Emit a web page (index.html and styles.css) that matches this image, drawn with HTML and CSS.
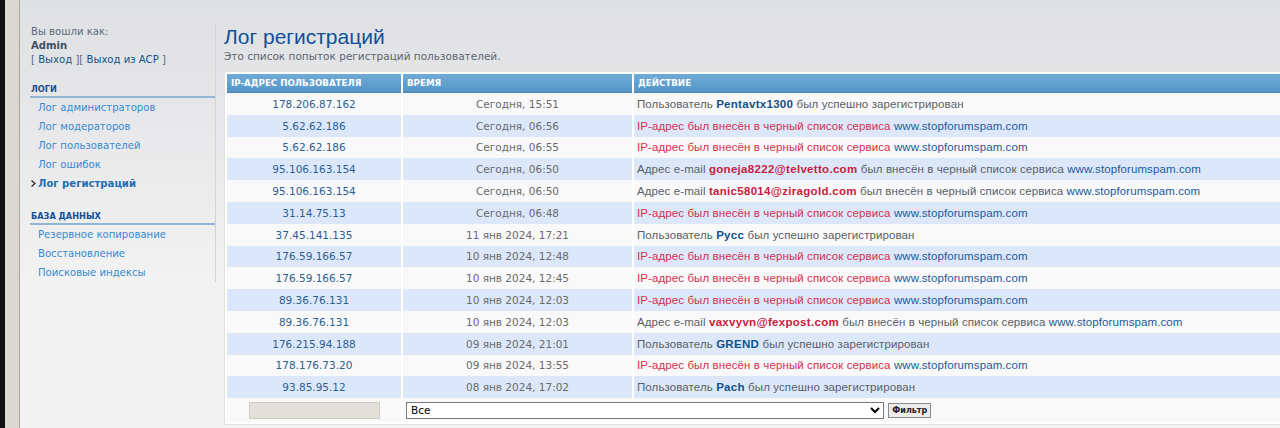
FILE: index.html
```html
<!DOCTYPE html>
<html lang="ru">
<head>
    <meta charset="UTF-8">
    <title>Лог регистраций</title>
    <link rel="stylesheet" href="styles.css">
</head>
<body>
    <div class="edge"></div>
    <div class="strip"></div>

    <div class="page">
        <!-- Меню слева -->
        <div class="sidebar">
            <div class="user-info">
                Вы вошли как:<br>
                <strong>Admin</strong><br>
                [ <a href="#">Выход</a> ][ <a href="#">Выход из ACP</a> ]
            </div>

            <h3>Логи</h3>
            <ul class="menu">
                <li><a href="#">Лог администраторов</a></li>
                <li><a href="#">Лог модераторов</a></li>
                <li><a href="#">Лог пользователей</a></li>
                <li><a href="#">Лог ошибок</a></li>
                <li class="active">
                    <svg class="arrow" width="5" height="7" viewBox="0 0 5 7"><path d="M0.5 0.5 L4 3.5 L0.5 6.5" fill="none" stroke="#333" stroke-width="1.4"/></svg>
                    <a href="#">Лог регистраций</a>
                </li>
            </ul>

            <h3>База данных</h3>
            <ul class="menu">
                <li><a href="#">Резервное копирование</a></li>
                <li><a href="#">Восстановление</a></li>
                <li><a href="#">Поисковые индексы</a></li>
            </ul>
        </div>

        <!-- Основная часть -->
        <div class="main">
            <h1>Лог регистраций</h1>
            <p class="subtitle">Это список попыток регистраций пользователей.</p>

            <div class="panel">
                <table class="log-table">
                    <thead>
                        <tr>
                            <th class="col-ip">IP-адрес пользователя</th>
                            <th class="col-time">Время</th>
                            <th>Действие</th>
                        </tr>
                    </thead>
                    <tbody>
                        <tr>
                            <td class="ip">178.206.87.162</td>
                            <td class="time">Сегодня, 15:51</td>
                            <td class="action">Пользователь <b class="user">Pentavtx1300</b> был успешно зарегистрирован</td>
                        </tr>
                        <tr>
                            <td class="ip">5.62.62.186</td>
                            <td class="time">Сегодня, 06:56</td>
                            <td class="action"><span class="bad">IP-адрес был внесён в черный список сервиса</span> <a href="#">www.stopforumspam.com</a></td>
                        </tr>
                        <tr>
                            <td class="ip">5.62.62.186</td>
                            <td class="time">Сегодня, 06:55</td>
                            <td class="action"><span class="bad">IP-адрес был внесён в черный список сервиса</span> <a href="#">www.stopforumspam.com</a></td>
                        </tr>
                        <tr>
                            <td class="ip">95.106.163.154</td>
                            <td class="time">Сегодня, 06:50</td>
                            <td class="action">Адрес e-mail <b class="mail">goneja8222@telvetto.com</b> был внесён в черный список сервиса <a href="#">www.stopforumspam.com</a></td>
                        </tr>
                        <tr>
                            <td class="ip">95.106.163.154</td>
                            <td class="time">Сегодня, 06:50</td>
                            <td class="action">Адрес e-mail <b class="mail">tanic58014@ziragold.com</b> был внесён в черный список сервиса <a href="#">www.stopforumspam.com</a></td>
                        </tr>
                        <tr>
                            <td class="ip">31.14.75.13</td>
                            <td class="time">Сегодня, 06:48</td>
                            <td class="action"><span class="bad">IP-адрес был внесён в черный список сервиса</span> <a href="#">www.stopforumspam.com</a></td>
                        </tr>
                        <tr>
                            <td class="ip">37.45.141.135</td>
                            <td class="time">11 янв 2024, 17:21</td>
                            <td class="action">Пользователь <b class="user">Pycc</b> был успешно зарегистрирован</td>
                        </tr>
                        <tr>
                            <td class="ip">176.59.166.57</td>
                            <td class="time">10 янв 2024, 12:48</td>
                            <td class="action"><span class="bad">IP-адрес был внесён в черный список сервиса</span> <a href="#">www.stopforumspam.com</a></td>
                        </tr>
                        <tr>
                            <td class="ip">176.59.166.57</td>
                            <td class="time">10 янв 2024, 12:45</td>
                            <td class="action"><span class="bad">IP-адрес был внесён в черный список сервиса</span> <a href="#">www.stopforumspam.com</a></td>
                        </tr>
                        <tr>
                            <td class="ip">89.36.76.131</td>
                            <td class="time">10 янв 2024, 12:03</td>
                            <td class="action"><span class="bad">IP-адрес был внесён в черный список сервиса</span> <a href="#">www.stopforumspam.com</a></td>
                        </tr>
                        <tr>
                            <td class="ip">89.36.76.131</td>
                            <td class="time">10 янв 2024, 12:03</td>
                            <td class="action">Адрес e-mail <b class="mail">vaxvyvn@fexpost.com</b> был внесён в черный список сервиса <a href="#">www.stopforumspam.com</a></td>
                        </tr>
                        <tr>
                            <td class="ip">176.215.94.188</td>
                            <td class="time">09 янв 2024, 21:01</td>
                            <td class="action">Пользователь <b class="user">GREND</b> был успешно зарегистрирован</td>
                        </tr>
                        <tr>
                            <td class="ip">178.176.73.20</td>
                            <td class="time">09 янв 2024, 13:55</td>
                            <td class="action"><span class="bad">IP-адрес был внесён в черный список сервиса</span> <a href="#">www.stopforumspam.com</a></td>
                        </tr>
                        <tr>
                            <td class="ip">93.85.95.12</td>
                            <td class="time">08 янв 2024, 17:02</td>
                            <td class="action">Пользователь <b class="user">Pach</b> был успешно зарегистрирован</td>
                        </tr>
                        <tr class="filter-row">
                            <td class="ip"><span class="blank-box"></span></td>
                            <td colspan="2" class="filter">
                                <select class="filter-select">
                                    <option>Все</option>
                                </select>
                                <button class="filter-btn">Фильтр</button>
                            </td>
                        </tr>
                    </tbody>
                </table>
            </div>
        </div>
    </div>
</body>
</html>
```

FILE: styles.css
```css
/* Сброс */
* {
    margin: 0;
    padding: 0;
    box-sizing: border-box;
}

body {
    display: flex;
    height: 428px;
    overflow: hidden;
    font-family: "DejaVu Sans", Verdana, sans-serif;
    font-size: 10.5px;
    color: #536482;
}

a {
    color: #105289;
    text-decoration: none;
}

/* Полоски слева */
.edge {
    width: 5px;
    flex-shrink: 0;
    background: #111111;
}

.strip {
    width: 15px;
    flex-shrink: 0;
    background: #dbd8d1;
    border-right: 1px solid #aaa69f;
}

.page {
    display: flex;
    align-items: flex-start;
    width: 1320px;
    flex-shrink: 0;
    background: linear-gradient(#dfe0e3 0, #f3f3f3 300px);
}

/* Меню слева */
.sidebar {
    width: 196px;
    flex-shrink: 0;
    margin-top: 25px;
    padding-left: 11px;
    border-right: 1px solid #d4d4d4;
    font-size: 10.1px;
}

.user-info {
    line-height: 14px;
    color: #5d6b7c;
}

.user-info strong {
    color: #3f4f62;
}

.user-info a {
    color: #105289;
}

.sidebar h3 {
    margin: 15px 0 0 -1px;
    padding-left: 1px;
    font-size: 8.2px;
    line-height: 14px;
    text-transform: uppercase;
    color: #115098;
    border-bottom: 2px solid #93b6d6;
}

.sidebar .menu + h3 {
    margin-top: 16px;
}

.menu {
    list-style: none;
}

.menu li {
    line-height: 19px;
    padding-left: 7px;
    position: relative;
}

.menu li a {
    color: #368ad2;
}

.menu li.active a {
    color: #1f6fb5;
    font-weight: bold;
}

.menu .arrow {
    position: absolute;
    left: 0;
    top: 6px;
}

/* Основная часть */
.main {
    flex: 1;
    margin-left: 8px;
}

h1 {
    margin-top: 26px;
    font-family: "Liberation Sans", Arial, sans-serif;
    font-size: 21px;
    font-weight: normal;
    line-height: 22px;
    color: #115098;
}

.subtitle {
    margin-top: 1px;
    line-height: 14px;
    color: #5c6470;
}

.panel {
    margin-top: 8px;
    background: #ffffff;
    border: 1px solid #e2e2e2;
    padding: 2px;
}

.log-table {
    width: 100%;
    border-collapse: separate;
    border-spacing: 2px 0;
    margin: 0 -2px;
    table-layout: fixed;
}

.log-table th {
    height: 19px;
    padding: 0 4px;
    text-align: left;
    font-size: 8.7px;
    font-weight: bold;
    text-transform: uppercase;
    color: #ffffff;
    background: linear-gradient(#6fabd6, #5596c7);
    border-bottom: 1px solid #4a86b5;
}

.log-table .col-ip {
    width: 174px;
}

.log-table .col-time {
    width: 229px;
}

.log-table td {
    height: 21.8px;
    padding: 0 3px;
    white-space: nowrap;
    background: #f9f9f9;
}

.log-table tbody tr:nth-child(even) td {
    background: #dce8fa;
}

.ip {
    text-align: center;
    color: #2d5f93;
}

.time {
    text-align: center;
    color: #6a6a6a;
}

.action {
    font-family: "Liberation Sans", Arial, sans-serif;
    font-size: 11.5px;
    letter-spacing: 0.1px;
    color: #595f66;
}

.action b {
    letter-spacing: 0.3px;
}

.action .user {
    color: #105289;
}

.action .bad {
    color: #d4304f;
}

.action .mail {
    color: #c8213f;
}

.action a {
    color: #1b5a9a;
}

/* Строка фильтра */
.log-table tr.filter-row td {
    height: 24px;
    background: #f9f9f9;
}

.blank-box {
    display: inline-block;
    width: 131px;
    height: 17px;
    vertical-align: middle;
    background: #e3e0db;
    border: 1px solid #cfccc6;
}

.filter {
    padding-left: 2px;
}

.filter-select {
    width: 478px;
    height: 17px;
    vertical-align: middle;
    font-family: "DejaVu Sans", Verdana, sans-serif;
    font-size: 10.5px;
    color: #000;
    background: #fff;
    border: 1px solid #7a7a7a;
}

.filter-btn {
    height: 15px;
    margin-left: 1px;
    padding: 0 3px;
    vertical-align: middle;
    font-family: "DejaVu Sans", Verdana, sans-serif;
    font-size: 8px;
    font-weight: bold;
    color: #222;
    background: #ececec;
    border: 1px solid #8a8a8a;
}
```
